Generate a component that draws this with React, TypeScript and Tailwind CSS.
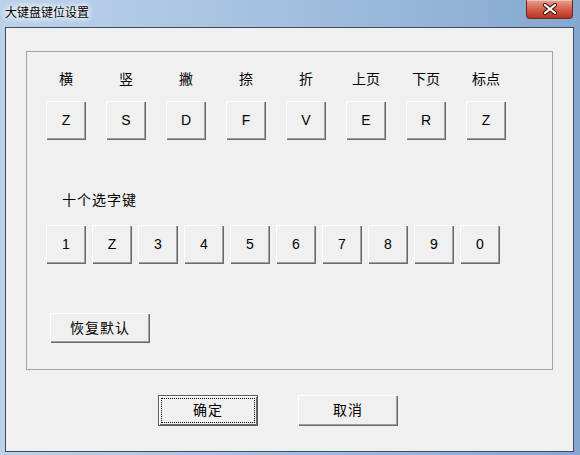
const topKeys = [
  { label: "横", key: "Z" },
  { label: "竖", key: "S" },
  { label: "撇", key: "D" },
  { label: "捺", key: "F" },
  { label: "折", key: "V" },
  { label: "上页", key: "E" },
  { label: "下页", key: "R" },
  { label: "标点", key: "Z" },
];

const selectKeys = ["1", "Z", "3", "4", "5", "6", "7", "8", "9", "0"];

const btn =
  "flex items-center justify-center bg-[#f0f0f0] text-black shadow-[inset_1px_1px_0_#ffffff,inset_-1px_-1px_0_#696969,inset_-2px_-2px_0_#a0a0a0]";

const KeyButton = ({ text }: { text: string }) => (
  <div className={`${btn} w-[40px] h-[39px] text-[14px]`}>{text}</div>
);

const CloseButton = () => (
  <div className="ml-auto mr-[7px] w-[47px] h-[19px] rounded-b-[4px] border border-t-0 border-[#6b2a22] bg-linear-to-b from-[#e9a193] via-[#d4604d] to-[#b8321f] shadow-[inset_0_1px_0_#f4c6bb] flex items-center justify-center">
    <svg width="16" height="12" viewBox="0 0 16 12">
      <path d="M3 2 L13 10 M13 2 L3 10" stroke="#4a1a14" strokeWidth="4.2" strokeLinecap="round" />
      <path d="M3 2 L13 10 M13 2 L3 10" stroke="#ffffff" strokeWidth="2.2" strokeLinecap="round" />
    </svg>
  </div>
);

const App = () => {
  return (
    <div className="w-[580px] h-[455px] flex flex-col bg-linear-to-r from-[#bcd2ea] via-[#a3bfdf] to-[#85a8d0] font-['Liberation_Sans','Noto_Sans_CJK_SC',sans-serif] overflow-hidden">
      {/* title bar */}
      <div className="h-[27px] flex items-start shrink-0">
        <div className="ml-[5px] mt-[5px] text-[12px] leading-[16px] text-black [text-shadow:0_0_4px_#ffffff,0_0_6px_#ffffff,0_0_8px_#ffffff]">
          大键盘键位设置
        </div>
        <CloseButton />
      </div>

      {/* client area */}
      <div className="ml-[5px] w-[569px] h-[425px] shrink-0 border border-[#3c4b5e] bg-[#f0f0f0] pl-[20px] pt-[23px]">
        <div className="w-[527px] h-[319px] border border-[#a0a0a0] flex flex-col">
          <div className="flex gap-[20px] pl-[19px] mt-[17px]">
            {topKeys.map((k, i) => (
              <div key={i} className="w-[40px] text-center text-[14px] leading-[20px] text-black">
                {k.label}
              </div>
            ))}
          </div>
          <div className="flex gap-[20px] pl-[19px] mt-[12px]">
            {topKeys.map((k, i) => (
              <KeyButton key={i} text={k.key} />
            ))}
          </div>

          <div className="pl-[35px] mt-[50px] text-[14px] leading-[20px] tracking-[1px] text-black">
            十个选字键
          </div>
          <div className="flex gap-[6px] pl-[19px] mt-[15px]">
            {selectKeys.map((k, i) => (
              <KeyButton key={i} text={k} />
            ))}
          </div>

          <div className="pl-[23px] mt-[49px]">
            <div className={`${btn} w-[100px] h-[30px] text-[14px] tracking-[1px]`}>恢复默认</div>
          </div>
        </div>

        <div className="flex gap-[40px] pl-[132px] mt-[25px]">
          <div className="w-[100px] h-[31px] border border-[#5a5a5a] bg-[#f0f0f0] p-[2px] shadow-[inset_1px_1px_0_#ffffff,inset_-1px_-1px_0_#696969]">
            <div className="w-full h-full border border-dotted border-black flex items-center justify-center text-[14px] tracking-[1px] text-black">
              确定
            </div>
          </div>
          <div className={`${btn} w-[100px] h-[31px] text-[14px] tracking-[1px]`}>取消</div>
        </div>
      </div>
    </div>
  );
};

export default App;
